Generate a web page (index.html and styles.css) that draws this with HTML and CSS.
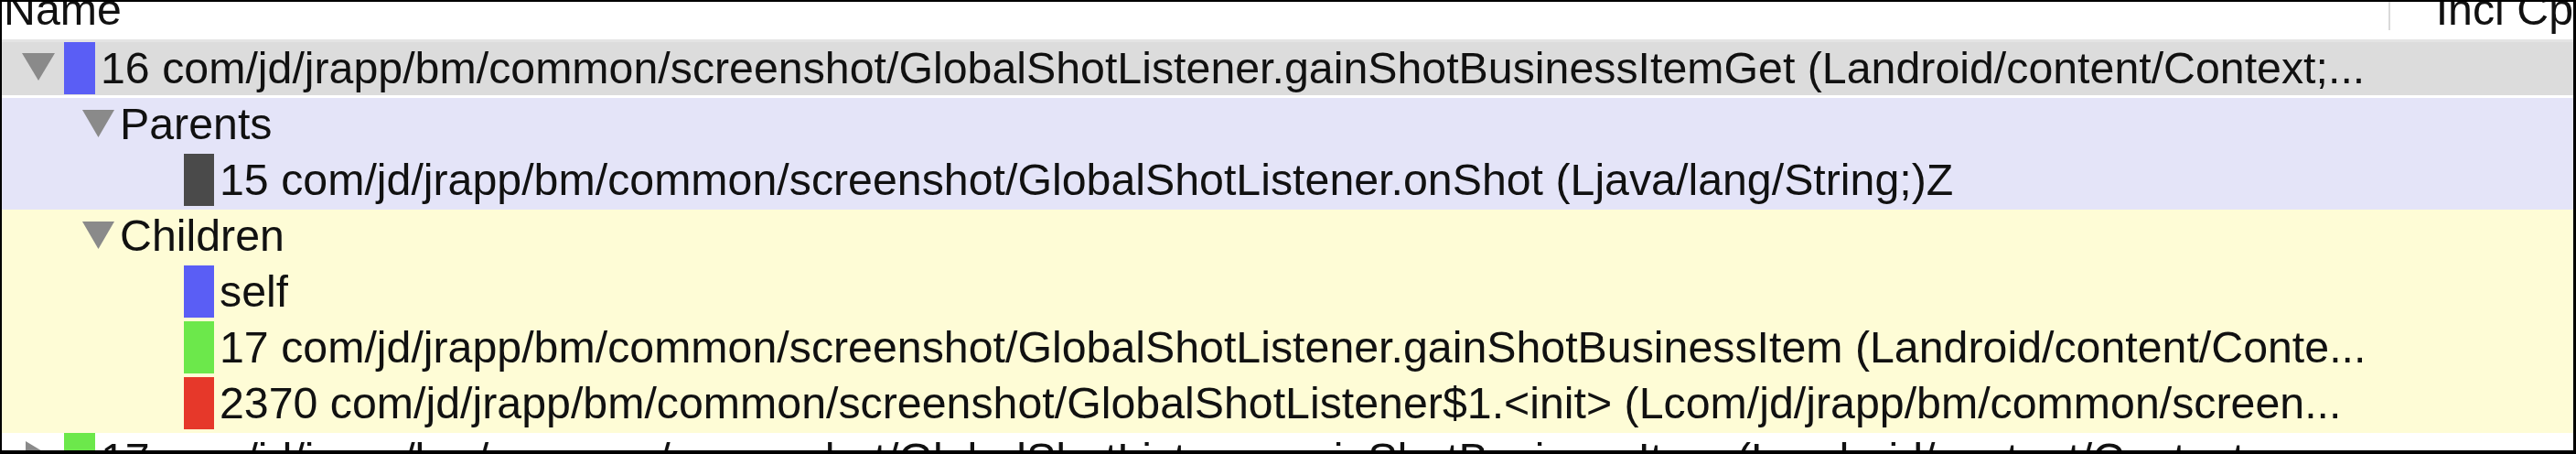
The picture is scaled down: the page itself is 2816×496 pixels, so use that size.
FILE: index.html
```html
<!DOCTYPE html>
<html>
<head>
<meta charset="utf-8">
<link rel="stylesheet" href="styles.css">
</head>
<body>
<div class="frame">
  <div class="header">
    <div class="hcell name-col">Name</div>
    <div class="hdivider"></div>
    <div class="hcell incl-col">Incl Cp</div>
  </div>
  <div class="tree">
    <div class="row lvl0 selected">
      <svg class="twisty" width="36" height="30" viewBox="0 0 36 30"><polygon points="0,0 36,0 18,30" /></svg>
      <span class="bar bar-blue"></span>
      <span class="label">16 com/jd/jrapp/bm/common/screenshot/GlobalShotListener.gainShotBusinessItemGet (Landroid/content/Context;...</span>
    </div>
    <div class="group parents">
      <div class="row lvl1">
        <svg class="twisty" width="35" height="30" viewBox="0 0 35 30"><polygon points="0,0 35,0 17.5,30" /></svg>
        <span class="label">Parents</span>
      </div>
      <div class="row lvl2">
        <span class="bar bar-dark"></span>
        <span class="label">15 com/jd/jrapp/bm/common/screenshot/GlobalShotListener.onShot (Ljava/lang/String;)Z</span>
      </div>
    </div>
    <div class="group children">
      <div class="row lvl1">
        <svg class="twisty" width="35" height="30" viewBox="0 0 35 30"><polygon points="0,0 35,0 17.5,30" /></svg>
        <span class="label">Children</span>
      </div>
      <div class="row lvl2">
        <span class="bar bar-blue"></span>
        <span class="label">self</span>
      </div>
      <div class="row lvl2">
        <span class="bar bar-green"></span>
        <span class="label">17 com/jd/jrapp/bm/common/screenshot/GlobalShotListener.gainShotBusinessItem (Landroid/content/Conte...</span>
      </div>
      <div class="row lvl2">
        <span class="bar bar-red"></span>
        <span class="label">2370 com/jd/jrapp/bm/common/screenshot/GlobalShotListener$1.&lt;init&gt; (Lcom/jd/jrapp/bm/common/screen...</span>
      </div>
    </div>
    <div class="row lvl0 collapsed">
      <svg class="twisty twisty-right" width="30" height="36" viewBox="0 0 30 36"><polygon points="0,0 30,18 0,36" /></svg>
      <span class="bar bar-green"></span>
      <span class="label">17 com/jd/jrapp/bm/common/screenshot/GlobalShotListener.gainShotBusinessItem (Landroid/content/Context;...</span>
    </div>
  </div>
</div>
</body>
</html>
```

FILE: styles.css
```css
html, body {
  margin: 0;
  padding: 0;
  background: #ffffff;
}

.frame {
  box-sizing: border-box;
  width: 2816px;
  height: 496px;
  border-top: 2px solid #000;
  border-left: 2px solid #000;
  border-right: 3px solid #000;
  border-bottom: 4px solid #000;
  background: #ffffff;
  overflow: hidden;
  font-family: "Liberation Sans", Arial, Helvetica, sans-serif;
  font-size: 48.3px;
  color: #111111;
}

.header {
  display: flex;
  height: 41px;
  border-bottom: 3px solid #e4e4e4;
  overflow: hidden;
  background: #ffffff;
}

.hcell {
  line-height: 48px;
  margin-top: -16px;
  white-space: nowrap;
}

.name-col {
  width: 2613px;
  padding-left: 2px;
  box-sizing: border-box;
}

.hdivider {
  width: 2px;
  height: 31px;
  background: #dadada;
}

.incl-col {
  padding-left: 50px;
}

.tree {
  display: flex;
  flex-direction: column;
}

.row {
  display: flex;
  align-items: flex-start;
  height: 61px;
  box-sizing: border-box;
  white-space: nowrap;
}

.row.selected {
  background: #dcdcdc;
  height: 58px;
  margin-bottom: 3px;
}

.parents {
  background: #e4e4f8;
}

.children {
  background: #fefcd6;
}

.lvl0 {
  padding-left: 22px;
}

.lvl1 {
  padding-left: 88px;
}

.lvl2 {
  padding-left: 199px;
}

.twisty {
  flex: none;
  margin-top: 12px;
  fill: #8a8a8a;
}

.lvl0 .twisty {
  margin-right: 10px;
}

.lvl1 .twisty {
  margin-right: 6px;
  margin-top: 13px;
}

.twisty-right {
  margin-left: 4px;
  margin-top: 9px;
}

.lvl0 .twisty-right {
  margin-right: 12px;
}

.bar {
  flex: none;
  display: block;
  width: 34px;
  height: 57px;
  margin-right: 6px;
}

.lvl2 .bar {
  width: 33px;
}

.bar-blue { background: #5a5ef5; }
.bar-dark { background: #4a4a4a; }
.bar-green { background: #6ce84b; }
.bar-red { background: #e6382a; }

.label {
  line-height: 57px;
  overflow: hidden;
}
```
